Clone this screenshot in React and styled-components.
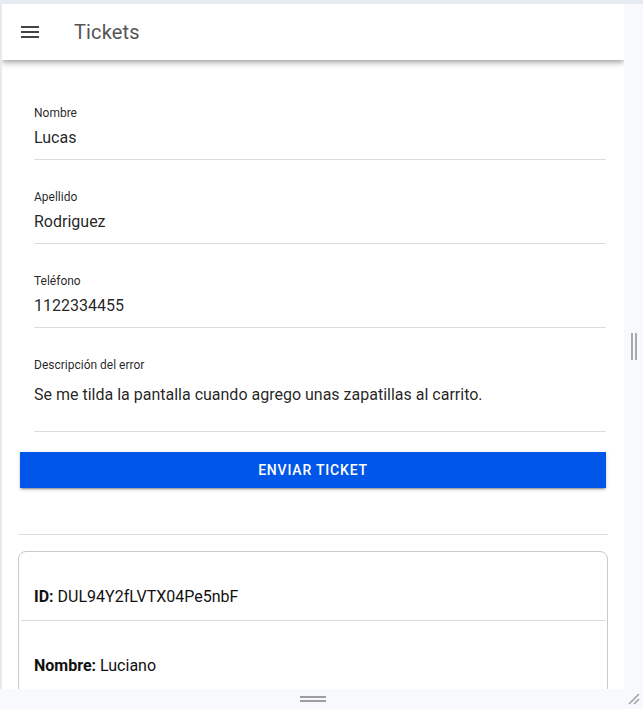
import React from "react";
import styled, { createGlobalStyle } from "styled-components";

const GlobalStyle = createGlobalStyle`
  html, body { margin: 0; padding: 0; }
  body {
    background: #e6ebf1;
    font-family: Roboto, "Liberation Sans", Arial, sans-serif;
    color: rgba(0,0,0,0.87);
  }
`;

const Frame = styled.div`
  width: 643px;
  height: 709px;
  display: flex;
  flex-direction: column;
  overflow: hidden;
`;

const Main = styled.div`
  flex: 1;
  min-height: 0;
  display: flex;
  padding: 4px 0 0 2px;
`;

const Panel = styled.div`
  width: 622px;
  background: #fff;
  display: flex;
  flex-direction: column;
  overflow: hidden;
`;

const SideGutter = styled.div`
  flex: 1;
  background: #f7f9fc;
  display: flex;
  align-items: center;
  justify-content: center;
`;

const VGrip = styled.div`
  width: 6px;
  height: 27px;
  border-left: 2px solid #a9a9a9;
  border-right: 2px solid #a9a9a9;
  box-sizing: border-box;
  margin-left: 1px;
`;

const BottomBar = styled.div`
  height: 20px;
  background: #f7f9fc;
  display: flex;
  align-items: center;
  justify-content: center;
  padding: 0 19px 0 2px;
  position: relative;
`;

const HGrip = styled.div`
  width: 26px;
  height: 6px;
  border-top: 2px solid #9e9e9e;
  border-bottom: 2px solid #9e9e9e;
  box-sizing: border-box;
`;

const ResizeCorner = styled.svg`
  position: absolute;
  right: 3px;
  bottom: 4px;
`;

const AppBar = styled.header`
  height: 56px;
  flex: none;
  display: flex;
  align-items: center;
  padding: 0 16px;
  background: #fff;
  position: relative;
  z-index: 2;
  box-shadow: 0px 2px 4px -1px rgba(0,0,0,0.2), 0px 4px 5px 0px rgba(0,0,0,0.14), 0px 1px 10px 0px rgba(0,0,0,0.12);
`;

const MenuButton = styled.div`
  width: 24px;
  height: 24px;
  display: flex;
  color: #444;
`;

const Title = styled.h1`
  margin: 0 0 0 32px;
  font-size: 20px;
  font-weight: 400;
  line-height: 32px;
  color: #555;
  letter-spacing: 0.15px;
`;

const Content = styled.div`
  flex: 1;
  padding: 45px 16px 0;
  display: flex;
  flex-direction: column;
`;

const Field = styled.div`
  margin: 0 2px 29px 16px;
  display: flex;
  flex-direction: column;
`;

const Label = styled.label`
  font-size: 12px;
  line-height: 16px;
  color: rgba(0,0,0,0.87);
`;

const Value = styled.div`
  margin-top: ${(p) => (p.$multi ? 10 : 5)}px;
  padding-bottom: ${(p) => (p.$multi ? 24 : 9)}px;
  font-size: 16px;
  line-height: 24px;
  color: rgba(0,0,0,0.87);
  border-bottom: 1px solid #dcdcdc;
`;

const Button = styled.button`
  margin: -9px 2px 0;
  height: 36px;
  border: none;
  border-radius: 0;
  background: #0056e8;
  color: #fff;
  font-family: Roboto, "Liberation Sans", Arial, sans-serif;
  font-size: 14px;
  font-weight: 500;
  letter-spacing: 0.8px;
  text-transform: uppercase;
  box-shadow: 0px 3px 1px -2px rgba(0,0,0,0.2), 0px 2px 2px 0px rgba(0,0,0,0.14), 0px 1px 5px 0px rgba(0,0,0,0.12);
`;

const Divider = styled.hr`
  margin: 46px 0 0;
  border: none;
  border-top: 1px solid #dedede;
`;

const Card = styled.div`
  margin-top: 16px;
  padding-bottom: 12px;
  border: 1px solid #c9c9c9;
  border-radius: 8px;
  display: flex;
  flex-direction: column;
`;

const Row = styled.div`
  padding: 35px 15px 13px 13px;
  margin: 0 2px;
  font-size: 16px;
  line-height: 20px;
  color: #111;
  border-bottom: ${(p) => (p.$last ? "none" : "1px solid #dcdcdc")};
  b { font-weight: 700; }
`;

const fields = [
  ["Nombre", "Lucas"],
  ["Apellido", "Rodriguez"],
  ["Teléfono", "1122334455"],
];

export default function App() {
  return (
    <>
      <GlobalStyle />
      <Frame>
        <Main>
          <Panel>
            <AppBar>
              <MenuButton>
                <svg width="24" height="24" viewBox="0 0 24 24" fill="currentColor">
                  <path d="M3 18h18v-2H3v2zm0-5h18v-2H3v2zm0-7v2h18V6H3z" />
                </svg>
              </MenuButton>
              <Title>Tickets</Title>
            </AppBar>
            <Content>
              {fields.map(([l, v]) => (
                <Field key={l}>
                  <Label>{l}</Label>
                  <Value>{v}</Value>
                </Field>
              ))}
              <Field>
                <Label>Descripción del error</Label>
                <Value $multi>Se me tilda la pantalla cuando agrego unas zapatillas al carrito.</Value>
              </Field>
              <Button>Enviar ticket</Button>
              <Divider />
              <Card>
                <Row>
                  <b>ID:</b> DUL94Y2fLVTX04Pe5nbF
                </Row>
                <Row $last>
                  <b>Nombre:</b> Luciano
                </Row>
              </Card>
            </Content>
          </Panel>
          <SideGutter>
            <VGrip />
          </SideGutter>
        </Main>
        <BottomBar>
          <HGrip />
          <ResizeCorner width="12" height="12" viewBox="0 0 12 12">
            <path d="M1 11L11 1M6 11L11 6" stroke="#a0a0a0" strokeWidth="1.5" fill="none" />
          </ResizeCorner>
        </BottomBar>
      </Frame>
    </>
  );
}
